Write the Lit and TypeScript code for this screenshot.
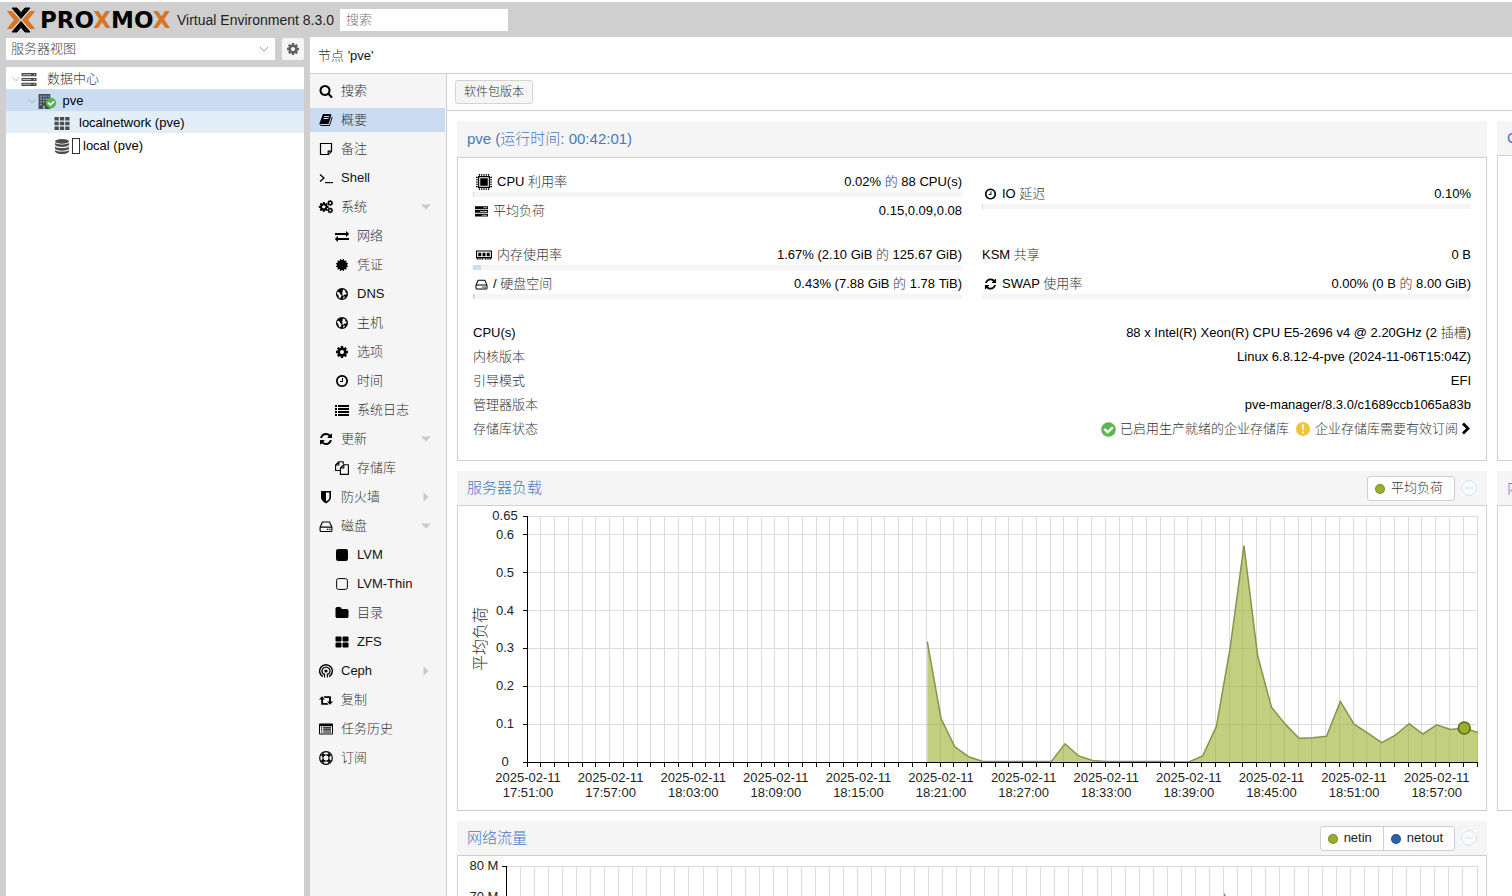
import { LitElement, html, svg, css, nothing } from "lit";
import { customElement, property } from "lit/decorators.js";
import { classMap } from "lit/directives/class-map.js";

const COG =
  "M1152 896q0-106-75-181t-181-75-181 75-75 181 75 181 181 75 181-75 75-181zm512-109v222q0 12-8 23t-20 13l-185 28q-19 54-39 91 35 50 107 138 10 12 10 25t-9 23q-27 37-99 108t-94 71q-12 0-26-9l-138-108q-44 23-91 38-16 136-29 186-7 28-36 28h-222q-14 0-24.5-8.5t-11.5-21.5l-28-184q-49-16-90-37l-141 107q-10 9-25 9-14 0-25-11-126-114-165-168-7-10-7-23 0-12 8-23 15-21 51-66.5t54-70.5q-27-50-41-99l-183-27q-13-2-21-12.5t-8-23.5v-222q0-12 8-23t19-13l186-28q14-46 39-92-40-57-107-138-10-12-10-24 0-10 9-23 26-36 98.5-107.5t94.5-71.5q13 0 26 10l138 107q44-23 91-38 16-136 29-186 7-28 36-28h222q14 0 24.5 8.5t11.5 21.5l28 184q49 16 90 37l142-107q9-9 24-9 13 0 25 10 129 119 165 170 7 8 7 22 0 12-8 23-15 21-51 66.5t-54 70.5q26 50 41 98l183 28q13 2 21 12.5t8 23.5z";

/* Glyphs on a 1792-unit grid. */
const LARGE_GRID: Record<string, string> = {
  cog: COG,
  search:
    "M1216 832q0-185-131.5-316.5t-316.5-131.5-316.5 131.5-131.5 316.5 131.5 316.5 316.5 131.5 316.5-131.5 131.5-316.5zm512 832q0 52-38 90t-90 38q-54 0-90-38l-343-342q-179 124-399 124-143 0-273.5-55.5t-225-150-150-225-55.5-273.5 55.5-273.5 150-225 225-150 273.5-55.5 273.5 55.5 225 150 150 225 55.5 273.5q0 220-124 399l343 343q37 37 37 90z",
  refresh:
    "M1639 1056q0 5-1 7-64 268-268 434.5t-478 166.5q-146 0-282.5-55t-243.5-157l-129 129q-19 19-45 19t-45-19-19-45v-448q0-26 19-45t45-19h448q26 0 45 19t19 45-19 45l-137 137q71 66 161 102t187 36q134 0 250-65t186-179q11-17 53-117 8-23 30-23h192q13 0 22.5 9.5t9.5 22.5zm25-800v448q0 26-19 45t-45 19h-448q-26 0-45-19t-19-45 19-45l138-138q-148-137-349-137-134 0-250 65t-186 179q-11 17-53 117-8 23-30 23h-199q-13 0-22.5-9.5t-9.5-22.5v-7q65-268 270-434.5t480-166.5q146 0 284 55.5t245 156.5l130-129q19-19 45-19t45 19 19 45z",
  clock:
    "M1024 544v448q0 14-9 23t-23 9h-320q-14 0-23-9t-9-23v-64q0-14 9-23t23-9h224v-352q0-14 9-23t23-9h64q14 0 23 9t9 23zm416 352q0-148-73-273t-198-198-273-73-273 73-198 198-73 273 73 273 198 198 273 73 273-73 198-198 73-273zm224 0q0 209-103 385.5t-279.5 279.5-385.5 103-385.5-103-279.5-279.5-103-385.5 103-385.5 279.5-279.5 385.5-103 385.5 103 279.5 279.5 103 385.5z",
  check:
    "M1412 734q0-28-18-46l-91-90q-19-19-45-19t-45 19l-408 407-226-226q-19-19-45-19t-45 19l-91 90q-18 18-18 46 0 27 18 45l362 362q19 19 45 19 27 0 46-19l543-543q18-18 18-45zm252 162q0 209-103 385.5t-279.5 279.5-385.5 103-385.5-103-279.5-279.5-103-385.5 103-385.5 279.5-279.5 385.5-103 385.5 103 279.5 279.5 103 385.5z",
  exchange:
    "M1792 1184v192q0 13-9.5 22.5t-22.5 9.5h-1376v192q0 13-9.5 22.5t-22.5 9.5q-12 0-24-10l-319-320q-9-9-9-22 0-14 9-23l320-320q9-9 23-9 13 0 22.5 9.5t9.5 22.5v192h1376q13 0 22.5 9.5t9.5 22.5zm0-544q0 14-9 23l-320 320q-9 9-23 9-13 0-22.5-9.5t-9.5-22.5v-192h-1376q-13 0-22.5-9.5t-9.5-22.5v-192q0-13 9.5-22.5t22.5-9.5h1376v-192q0-14 9-23t23-9q12 0 24 10l319 319q9 9 9 23z",
  certificate:
    "M1504 896l138 135q30 28 20 70-12 41-52 51l-188 48 53 186q12 41-19 70-29 31-70 19l-186-53-48 188q-10 40-51 52-12 2-19 2-31 0-51-22l-135-138-135 138q-28 30-70 20-41-11-51-52l-48-188-186 53q-41 12-70-19-31-29-19-70l53-186-188-48q-40-10-52-51-10-42 20-70l138-135-138-135q-30-28-20-70 12-41 52-51l188-48-53-186q-12-41 19-70 29-31 70-19l186 53 48-188q10-41 51-51 41-12 70 19l135 139 135-139q29-30 70-19 41 10 51 51l48 188 186-53q41-12 70 19 31 29 19 70l-53 186 188 48q40 10 52 51 10 42-20 70z",
  folder:
    "M1728 608v704q0 92-66 158t-158 66h-1216q-92 0-158-66t-66-158v-960q0-92 66-158t158-66h320q92 0 158 66t66 158v32h672q92 0 158 66t66 158z",
  book: "M1703 478q40 57 18 129l-275 906q-19 64-76.5 107.5t-122.5 43.5h-923q-77 0-148.5-53.5t-99.5-131.5q-24-67-2-127 0-4 3-27t4-37q1-8-3-21.5t-3-19.5q2-11 8-21t16.5-23.5 16.5-23.5q23-38 45-91.5t30-91.5q3-10 .5-30t-.5-28q3-11 17-28t17-23q21-36 42-92t25-90q1-9-2.5-32t.5-28q4-13 22-30.5t22-22.5q19-26 42.5-84.5t27.5-96.5q1-8-3-25.5t-2-26.5q2-8 9-18t18-23 17-21q8-12 16.5-30.5t15-35 16-36 19.5-32 26.5-23.5 36-11.5 47.5 5.5l-1 3q38-9 51-9h761q74 0 114 56t18 130l-274 906q-36 119-71.5 153.5t-128.5 34.5h-869q-27 0-38 15-11 16-1 43 24 70 144 70h923q29 0 56-15.5t35-41.5l300-987q7-22 5-57 38 15 59 43zm-1064 2q-4 13 2 22.5t20 9.5h608q13 0 25.5-9.5t16.5-22.5l21-64q4-13-2-22.5t-20-9.5h-608q-13 0-25.5 9.5t-16.5 22.5zm-83 256q-4 13 2 22.5t20 9.5h608q13 0 25.5-9.5t16.5-22.5l21-64q4-13-2-22.5t-20-9.5h-608q-13 0-25.5 9.5t-16.5 22.5z",
};

/* Glyphs on a 14-unit grid. */
const SMALL_GRID: Record<string, unknown> = {
  note: svg`<path d="M1.5 1.5h11v8l-3 3h-8z M12.5 9.2H9.2v3.3" fill="none" stroke="currentColor" stroke-width="1.2"/>`,
  terminal: svg`<path d="M1 3.5l4 3.5-4 3.5" fill="none" stroke="currentColor" stroke-width="1.2"/><path d="M6 11h8v1.2H6z"/>`,
  cogs: svg`<g transform="translate(-1 1.2) scale(.0064)"><path d=${COG}/></g><g transform="translate(7.8 -.4) scale(.0038)"><path d=${COG}/></g><g transform="translate(7.8 7) scale(.0038)"><path d=${COG}/></g>`,
  globe: svg`<path fill-rule="evenodd" d="M7 1a6 6 0 1 0 0 12A6 6 0 0 0 7 1z M8.6 2.600l1.900 1.200-.6 1.100 1 .5.9 1.200-.9 1.100-1.600-.2-1.200 1.400-.9-.9.6-1.500-1-.6.9-1.200-.2-1.300z M2.200 5l1.200-.3 1.400 1 .2 1.400L6.600 8l-.5 1.700-1 1.900-1.300-1-.3-2L2.200 7z" /><path d="M8.600 9.400l1.600.4-1.300 2-.9-.6z" fill="#f5f5f5"/>`,
  list: svg`<path d="M0 2h2v2H0z M0 5h2v2H0z M0 8h2v2H0z M0 11h2v2H0z M3 2h11v2H3z M3 5h11v2H3z M3 8h11v2H3z M3 11h11v2H3z"/>`,
  copy: svg`<g fill="none" stroke="currentColor" stroke-width="1.100" stroke-linejoin="round"><path d="M5 9.500H.6V4L3.600.8h4.600v2.500 M3.800.8V4H.6"/><path d="M8.600 3.800h4.800v9.600H5.400V7z M8.800 3.800V7H5.400"/></g>`,
  shield: svg`<path fill-rule="evenodd" d="M2 1h10v6.600c0 2.400-2.400 4.600-5 5.800-2.600-1.200-5-3.400-5-5.800z M7 2.600v9c2-1.100 3.400-2.500 3.400-4V2.600z"/>`,
  disk: svg`<path d="M3.400 3h7.200l2.300 5.200v3.300a1 1 0 0 1-1 1H2.100a1 1 0 0 1-1-1V8.200z M1.200 8.100h11.600" fill="none" stroke="currentColor" stroke-width="1.100" stroke-linejoin="round"/><path d="M8 9.700h1.300V11H8z M10.200 9.700h1.300V11h-1.300z"/>`,
  square: svg`<rect x="1" y="1" width="12" height="12" rx="2.200"/>`,
  squareOpen: svg`<rect x="1.600" y="1.600" width="10.800" height="10.800" rx="2" fill="none" stroke="currentColor" stroke-width="1"/>`,
  grid: svg`<rect x=".5" y="1.500" width="6" height="5" rx="1"/><rect x="7.500" y="1.500" width="6" height="5" rx="1"/><rect x=".5" y="7.500" width="6" height="5" rx="1"/><rect x="7.500" y="7.500" width="6" height="5" rx="1"/>`,
  ceph: svg`<g fill="none" stroke="currentColor" stroke-width="1.500"><path d="M3.800 12.600a6.400 6.400 0 1 1 6.400 0"/><path d="M4.800 10.400a4 4 0 1 1 4.400 0" stroke-width="1.300"/><path d="M5.600 13.500V9.600M8.400 13.500V9.600" stroke-width="1.100"/></g><circle cx="7" cy="7" r="1.600"/>`,
  retweet: svg`<path d="M3 3.200L6 6.400H4v3.600h4.200l1.300 1.800H2.200V6.400H0z M11 11.800L8 8.600h2V5H5.800L4.500 3.200h7.400v5.400H14z"/>`,
  listAlt: svg`<path fill-rule="evenodd" d="M1 1.500h12a1 1 0 0 1 1 1v9a1 1 0 0 1-1 1H1a1 1 0 0 1-1-1v-9a1 1 0 0 1 1-1z M1 4.300v7.200h12V4.300z"/><path d="M2 5.200h1.200v1.200H2z M2 7.300h1.200v1.200H2z M2 9.400h1.200v1.200H2z M4.200 5.200H12v1.200H4.200z M4.200 7.300H12v1.200H4.200z M4.200 9.400H12v1.200H4.200z"/>`,
  ring: svg`<circle cx="7" cy="7" r="6.300" fill="none" stroke="currentColor" stroke-width="1.200"/><circle cx="7" cy="7" r="3.200" fill="none" stroke="currentColor" stroke-width="1"/><path d="M2 4.200L4.200 2l2 2L4 6.200z M9.800 2L12 4.200l-2 2L7.800 4z M12 9.800L9.800 12l-2-2L10 7.800z M4.200 12L2 9.800l2-2L6.200 10z"/>`,
  tasks: svg`<path d="M0 2h14v3H0z M0 6h14v3H0z M0 10h14v3H0z"/><path d="M9 3h4v1H9z M5.500 7H13v1H5.500z M7.500 11H13v1H7.500z" fill="#bbb"/>`,
  server: svg`<path d="M0 1h14v3H0z M0 5.500h14v3H0z M0 10h14v3H0z"/><path d="M1 2h8v1H1z M1 6.500h8v1H1z M1 11h8v1H1z" fill="#bbb"/><path d="M11.500 2h1v1h-1z M11.500 6.500h1v1h-1z M11.500 11h1v1h-1z" fill="#eee"/>`,
  building: svg`<path d="M1 0h11v14H1z"/><path d="M2.500 1.500h1.500v1.500H2.500z M5 1.500h1.500v1.500H5z M7.500 1.500H9v1.500H7.500z M10 1.500h1v1.500h-1z M2.500 4h1.500v1.500H2.500z M5 4h1.500v1.500H5z M7.500 4H9v1.500H7.500z M2.500 6.500h1.500V8H2.500z M5 6.500h1.500V8H5z M7.500 6.500H9V8H7.500z M2.500 9h1.500v1.500H2.500z M5 11h2v3H5z" fill="#7fa0d0"/>`,
  th: svg`<path d="M0 1h4v3.300H0z M5 1h4v3.300H5z M10 1h4v3.300h-4z M0 5.400h4v3.300H0z M5 5.400h4v3.300H5z M10 5.400h4v3.300h-4z M0 9.800h4V13H0z M5 9.800h4V13H5z M10 9.800h4V13h-4z"/>`,
  database: svg`<ellipse cx="7" cy="2.200" rx="6.500" ry="2.200"/><path d="M.5 3.600c1.600 1.900 11.400 1.900 13 0v2.100c-1.600 2.400-11.400 2.400-13 0z M.5 7c1.600 1.900 11.400 1.900 13 0v2.100c-1.600 2.400-11.400 2.400-13 0z M.5 10.300c1.600 1.900 11.400 1.900 13 0v1.500c-1.600 2.900-11.400 2.900-13 0z"/>`,
  chip: svg`<path fill-rule="evenodd" d="M1.800 1.800h10.400v10.400H1.800z M2.800 2.800v8.400h8.400V2.800z"/><path d="M3.700 3.700h6.600v6.600H3.700z"/><path d="M3 0v14M5 0v14M7 0v14M9 0v14M11 0v14M0 3h14M0 5h14M0 7h14M0 9h14M0 11h14" stroke="currentColor" stroke-width="1" stroke-dasharray="1.600 10.800"/>`,
  memory: svg`<path fill-rule="evenodd" d="M0 3h14v7H0z M1 4v4.800h12V4z"/><path d="M2 5h2.600v3H2z M5.700 5h2.600v3H5.700z M9.400 5H12v3H9.400z M1 10h1v1.200H1z M3 10h1v1.200H3z M5 10h1v1.200H5z M8 10h1v1.200H8z M10 10h1v1.200h-1z M12 10h1v1.200h-1z"/>`,
  warn: svg`<circle cx="7" cy="7" r="7"/><path d="M5.900 2.500h2.200l-.3 5.700H6.200z M6 9.400h2v2H6z" fill="#fff"/>`,
  right: svg`<path d="M4 1.500l5 5-5 5" fill="none" stroke="currentColor" stroke-width="2.800"/>`,
  chevron: svg`<path d="M2 4.500l5 5 5-5" fill="none" stroke="currentColor" stroke-width="1"/>`,
  caretDown: svg`<path d="M2 4.500h10l-5 5z"/>`,
  caretRight: svg`<path d="M4.500 2v10l5-5z"/>`,
};

const icon = (name: string, cls = "") =>
  name in LARGE_GRID
    ? html`<svg class="icon ${cls}" viewBox="0 0 1792 1792" aria-hidden="true"><path d=${LARGE_GRID[name]} /></svg>`
    : html`<svg class="icon ${cls}" viewBox="0 0 14 14" aria-hidden="true">${SMALL_GRID[name]}</svg>`;

const base = css`
  * { box-sizing: border-box; }
  .icon { width: 14px; height: 14px; flex: none; fill: currentColor; display: block; overflow: visible; }
  button, input, select { font: inherit; color: inherit; margin: 0; }
`;

interface Series { name: string; color: string; edge: string; values: (number | null)[]; }

@customElement("rrd-chart")
export class RrdChart extends LitElement {
  @property({ attribute: false }) series!: Series;
  @property({ attribute: false }) ticks: { value: number; label: string }[] = [];
  @property({ type: Number }) max = 1;
  @property() caption = "";
  @property({ type: Number }) marker = -1;

  static styles = [base, css`
    :host { display: block; }
    .plot { display: block; width: 100%; height: 246px; overflow: visible; font-size: 13px; }
    .grid { stroke: #dcdcdc; shape-rendering: crispEdges; }
    .axis { stroke: #000; shape-rendering: crispEdges; }
    .line { fill: none; stroke-width: 1.5; vector-effect: non-scaling-stroke; }
    .label { fill: #222; text-anchor: middle; }
    .caption { fill: #333; font-size: 16px; text-anchor: middle; }
  `];

  private time(minute: number) {
    const total = 17 * 60 + 51 + minute;
    return `${Math.floor(total / 60)}:${String(total % 60).padStart(2, "0")}:00`;
  }

  render() {
    const { values, color, edge } = this.series;
    const n = values.length - 1;
    const h = 246;
    const y = (v: number) => h - (v / this.max) * h;
    const pts = values.flatMap((v, i) => (v === null ? [] : [[i, y(v)]]));
    const line = pts.map((p, i) => `${i ? "L" : "M"}${p[0]} ${p[1].toFixed(2)}`).join("");
    const area = `${line}L${n} ${h}L${pts[0][0]} ${h}Z`;
    const minutes = values.map((_, i) => i);
    const pct = (i: number) => `${(i / n) * 100}%`;
    return html`<svg class="plot" role="img" aria-label=${this.caption || this.series.name}>
      ${this.ticks.map((t) => svg`<line class="grid" x1="0" x2="100%" y1=${y(t.value)} y2=${y(t.value)} />`)}
      ${minutes.map((i) => svg`<line class="grid" x1=${pct(i)} x2=${pct(i)} y1="0" y2=${h} />`)}
      <g transform="translate(1 0)">
        <svg width="100%" height=${h} viewBox="0 0 ${n} ${h}" preserveAspectRatio="none">
          <path d=${area} fill=${color} fill-opacity="0.6" />
          <path class="line" d=${line} stroke=${edge} />
        </svg>
      </g>
      <line class="axis" x1="0" x2="0" y1="0" y2=${h} />
      <line class="axis" x1="0" x2="100%" y1=${h} y2=${h} />
      ${this.ticks.map((t) => svg`
        <line class="axis" x1="-4" x2="0" y1=${y(t.value)} y2=${y(t.value)} />
        <text class="label" x="-22" y=${y(t.value) + 4}>${t.label}</text>`)}
      ${minutes.map((i) => svg`<line class="axis" x1=${pct(i)} x2=${pct(i)} y1=${h} y2=${h + 5} />`)}
      <g transform="translate(1 0)">
        ${minutes.filter((i) => i % 6 === 0).map((i) => svg`
          <text class="label" y=${h + 20}><tspan x=${pct(i)}>2025-02-11</tspan><tspan x=${pct(i)} dy="15">${this.time(i)}</tspan></text>`)}
        ${this.marker >= 0
          ? svg`<circle cx=${pct(this.marker)} cy=${y(values[this.marker]!)} r="6" fill=${color} stroke="#5a6a10" stroke-width="1.500" />`
          : nothing}
      </g>
      ${this.caption ? svg`<text class="caption" transform="rotate(-90)" x=${-h / 2} y="-41">${this.caption}</text>` : nothing}
    </svg>`;
  }
}

interface NavItem { icon: string; label: string; child?: boolean; caret?: "caretDown" | "caretRight"; active?: boolean; }

const NAV: NavItem[] = [
  { icon: "search", label: "搜索" },
  { icon: "book", label: "概要", active: true },
  { icon: "note", label: "备注" },
  { icon: "terminal", label: "Shell" },
  { icon: "cogs", label: "系统", caret: "caretDown" },
  { icon: "exchange", label: "网络", child: true },
  { icon: "certificate", label: "凭证", child: true },
  { icon: "globe", label: "DNS", child: true },
  { icon: "globe", label: "主机", child: true },
  { icon: "cog", label: "选项", child: true },
  { icon: "clock", label: "时间", child: true },
  { icon: "list", label: "系统日志", child: true },
  { icon: "refresh", label: "更新", caret: "caretDown" },
  { icon: "copy", label: "存储库", child: true },
  { icon: "shield", label: "防火墙", caret: "caretRight" },
  { icon: "disk", label: "磁盘", caret: "caretDown" },
  { icon: "square", label: "LVM", child: true },
  { icon: "squareOpen", label: "LVM-Thin", child: true },
  { icon: "folder", label: "目录", child: true },
  { icon: "grid", label: "ZFS", child: true },
  { icon: "ceph", label: "Ceph", caret: "caretRight" },
  { icon: "retweet", label: "复制" },
  { icon: "listAlt", label: "任务历史" },
  { icon: "ring", label: "订阅" },
];

interface Metric { icon?: string; large?: boolean; label: string; value: string; usage?: number; }

const METRICS: Record<string, Metric[]> = {
  cpu: [
    { icon: "chip", large: true, label: "CPU 利用率", value: "0.02% 的 88 CPU(s)", usage: 0.2 },
    { icon: "tasks", label: "平均负荷", value: "0.15,0.09,0.08" },
  ],
  io: [{ icon: "clock", label: "IO 延迟", value: "0.10%", usage: 0.2 }],
  memory: [
    { icon: "memory", large: true, label: "内存使用率", value: "1.67% (2.10 GiB 的 125.67 GiB)", usage: 1.67 },
    { icon: "disk", label: "/ 硬盘空间", value: "0.43% (7.88 GiB 的 1.78 TiB)", usage: 0.43 },
  ],
  swap: [
    { label: "KSM 共享", value: "0 B" },
    { icon: "refresh", label: "SWAP 使用率", value: "0.00% (0 B 的 8.00 GiB)", usage: 0 },
  ],
};

const DETAILS = [
  ["CPU(s)", "88 x Intel(R) Xeon(R) CPU E5-2696 v4 @ 2.20GHz (2 插槽)"],
  ["内核版本", "Linux 6.8.12-4-pve (2024-11-06T15:04Z)"],
  ["引导模式", "EFI"],
  ["管理器版本", "pve-manager/8.3.0/c1689ccb1065a83b"],
];

const LOAD: Series = {
  name: "平均负荷", color: "#9aad2c", edge: "#87944c",
  values: [
    ...Array(29).fill(null),
    0.318, 0.115, 0.04, 0.014, 0.002, 0.001, 0.001, 0.001, 0.001, 0.001, 0.048, 0.016, 0.004, 0.001, 0.001, 0.001,
    0.001, 0.001, 0, 0, 0.016, 0.094, 0.302, 0.572, 0.28, 0.145, 0.1, 0.063, 0.064, 0.068, 0.16, 0.1, 0.076, 0.051,
    0.071, 0.101, 0.074, 0.098, 0.086, 0.09, 0.078,
  ],
};

const NETIN: Series = {
  name: "netin", color: "#9aad2c", edge: "#87944c",
  values: [...Array(29).fill(null), ...Array(22).fill(0), 71, ...Array(18).fill(0)],
};

@customElement("app-root")
export class AppRoot extends LitElement {
  static styles = [base, css`
    :host {
      display: flex; flex-direction: column; height: 100vh; overflow: hidden; background: #cfcfcf; color: #000;
      font: 300 13px/20px "Liberation Sans", "Noto Sans CJK SC", sans-serif; border-top: 2px solid #fff;
    }
    .zh { color: #333; }
    .top { display: flex; align-items: center; height: 35px; padding-left: 6px; flex: none; }
    .mark { width: 30px; height: 26px; flex: none; }
    .brand { font: 700 23px/26px "DejaVu Sans", sans-serif; margin-left: 4px; width: 131px; }
    .brand .x { color: #d9751f; }
    .version { margin-left: 6px; font-size: 14px; width: 157px; white-space: nowrap; color: #222; }
    .search { margin-left: 6px; width: 168px; height: 22px; border: 0; background: #fff; padding: 0 6px; outline: 0; }
    .search::placeholder { color: #777; opacity: 1; }
    .body { display: flex; flex: 1; min-height: 0; }
    .side { width: 310px; flex: none; padding: 1px 6px 0; display: flex; flex-direction: column; }
    .view { display: flex; gap: 7px; height: 22px; margin-bottom: 7px; flex: none; }
    .combo { flex: 1; display: grid; background: #fff; }
    .combo select { grid-area: 1 / 1; appearance: none; border: 0; background: none; padding: 0 5px; color: #444; outline: 0; }
    .combo .icon { grid-area: 1 / 1; justify-self: end; align-self: center; margin-right: 5px; color: #888; width: 12px; }
    .gear { width: 22px; height: 22px; border: 0; background: #f5f5f5; border-radius: 2px; display: grid; place-items: center; padding: 0; color: #606060; }
    .tree { flex: 1; background: #fff; margin: 0; padding: 0; list-style: none; }
    .node { display: flex; align-items: center; height: 22px; padding-top: 2px; white-space: pre; }
    .node .fold { width: 10px; height: 10px; color: #999; }
    .node .kind { color: #4c4c4c; width: 16px; height: 15px; }
    .node.selected { background: #c9dcf2; }
    .node.hover { background: #e2eff9; }
    .l0 { padding-left: 5px; } .l0 .name { margin-left: 10px; }
    .l1 { padding-left: 21px; } .l1 .name { margin-left: 2px; }
    .l2 { padding-left: 48px; } .l2 .name { margin-left: 9px; }
    .l3 { padding-left: 48px; height: 24px; } .l3 .name { margin-left: 3px; }
    .l1 .badge { width: 12px; height: 12px; color: #4fb848; align-self: flex-end; margin: 0 0 2px -8px; background: radial-gradient(#fff 50%, transparent 55%); }
    .tofu { width: 8px; height: 16px; border: 1px solid #333; margin-left: 2px; }
    .main { flex: 1; min-width: 0; background: #fff; display: flex; flex-direction: column; }
    .title { height: 37px; flex: none; padding: 2px 8px 0; display: flex; align-items: center; border-bottom: 1px solid #cfcfcf; white-space: pre; color: #111; font-size: 13px; font-weight: inherit; margin: 0; }
    .work { flex: 1; display: flex; min-height: 0; }
    .nav { width: 137px; flex: none; background: #f5f5f5; border-right: 1px solid #cfcfcf; padding: 5px 1px 0 0; display: flex; flex-direction: column; gap: 5px; }
    .item { display: flex; align-items: center; height: 24px; padding-left: 9px; gap: 8px; color: #111; text-decoration: none; flex: none; }
    .item.child { padding-left: 25px; }
    .item.active { background: #c9dcf2; }
    .item .caret { margin-left: auto; margin-right: 12px; color: #cfcfcf; }
    .item .icon { color: #000; }
    .item .caret.icon { color: #cacaca; }
    .page { flex: 1; min-width: 0; display: flex; flex-direction: column; }
    .tools { height: 37px; flex: none; border-bottom: 1px solid #cfcfcf; padding: 6px 8px; }
    .tools button { height: 24px; padding: 0 8px; border: 1px solid #d4d4d4; border-radius: 3px; background: #f5f5f5; font-size: 12px; line-height: 20px; display: block; color: #333; }
    .rows { flex: 1; min-height: 0; overflow: hidden; padding: 10px 0 0 10px; display: flex; flex-direction: column; gap: 10px; }
    .row { display: flex; gap: 10px; flex: none; }
    .panel { flex: 0 0 calc(100% - 25px); display: flex; flex-direction: column; }
    .head { height: 34px; background: #f5f5f5; color: #4a76c4; display: flex; align-items: center; padding: 0 10px; gap: 6px; flex: none; }
    .head.tall { height: 36px; }
    .head h2 { font-size: 15px; font-weight: inherit; margin: 0 auto 0 0; white-space: nowrap; }
    .card { border: 1px solid #cfcfcf; flex: 1; }
    .legend { display: flex; border: 1px solid #cfcfcf; border-radius: 3px; background: #fff; height: 25px; overflow: hidden; }
    .legend button { border: 0; background: none; padding: 0 11px 0 7px; display: flex; align-items: center; gap: 6px; color: #222; }
    .legend button + button { border-left: 1px solid #cfcfcf; }
    .dot { width: 10px; height: 10px; border-radius: 5px; border: 1px solid rgba(0, 0, 0, 0.2); margin-top: 2px; }
    .dot.a { background: #9aad2c; }
    .dot.b { background: #2f5fa8; }
    .reset { border: 0; padding: 0; width: 16px; height: 16px; background: #fafbfc; color: #d3e0ef; display: block; }
    .reset .icon { width: 16px; height: 16px; }
    .status { padding: 13px 15px 19px; }
    .metrics { display: grid; grid-template-columns: 1fr 1fr; column-gap: 20px; row-gap: 23px; align-items: center; margin-bottom: 22px; }
    .metric { height: 29px; }
    .metric:last-child { height: auto; }
    .pair { display: flex; justify-content: space-between; height: 21px; line-height: 22px; }
    .pair .what { display: flex; align-items: center; white-space: pre; }
    .pair .icon { margin: 0 5px 0 2px; width: 13px; }
    .pair .icon.large { width: 16px; height: 16px; margin: 0 5px 0 3px; }
    .bar { height: 5px; background: #f5f5f5; }
    .fill { height: 5px; background: #c9dcf2; }
    .detail { display: flex; justify-content: space-between; align-items: center; height: 24px; }
    .repo { display: flex; align-items: center; white-space: pre; }
    .repo .icon { margin-right: 4px; }
    .repo .good { color: #5bb850; width: 17px; height: 17px; margin-right: 3px; }
    .repo .mid { color: #f4c430; margin: 0 5px 0 7px; }
    .repo .go { margin: 0 -2px 0 1px; }
    .load { padding: 10px 9px 48px 69px; }
    .net { padding: 10px 9px 48px 48px; }
    @media (max-width: 900px) { .side { width: 220px; } .metrics { grid-template-columns: 1fr; } }
  `];

  /* Han runs are set in a lighter tone than the Latin text beside them. */
  private text(s: string) {
    return s.split(/([\u4e00-\u9fff]+)/).map((p, i) => (i % 2 ? html`<span class="zh">${p}</span>` : p));
  }

  private metric(m: Metric) {
    return html`<div class="metric">
      <div class="pair">
        <span class="what">${m.icon ? icon(m.icon, m.large ? "large" : "") : nothing}<span>${this.text(m.label)}</span></span>
        <span>${this.text(m.value)}</span>
      </div>
      ${m.usage === undefined ? nothing : html`<div class="bar"><div class="fill" style="width:${m.usage}%"></div></div>`}
    </div>`;
  }

  private reset() {
    return html`<button class="reset" aria-label="重置缩放"><svg class="icon" viewBox="0 0 16 16"><circle cx="8" cy="8" r="7.500" fill="none" stroke="currentColor" /><path d="M4 7.500h8v1H4z" /></svg></button>`;
  }

  render() {
    return html`
      <header class="top">
        <svg class="mark" viewBox="0 0 30 26" aria-hidden="true">
          <path d="M1.500 4.500h4.500l7.500 8.500-7.500 8.500H1.500L8.500 13z M28.500 4.500H24L16.500 13l7.500 8.500h4.500L21.500 13z" fill="#d9751f" stroke="#d9751f" stroke-linejoin="round" />
          <path d="M6 1h5l4 4.800L19 1h5l-9 10.500z M6 25h5l4-4.800 4 4.800h5l-9-10.500z" fill="#000" stroke="#000" stroke-linejoin="round" />
        </svg>
        <span class="brand">PRO<span class="x">X</span>MO<span class="x">X</span></span>
        <span class="version">Virtual Environment 8.3.0</span>
        <input class="search" type="text" placeholder="搜索" aria-label="搜索" />
      </header>
      <div class="body">
        <aside class="side">
          <div class="view">
            <div class="combo">
              <select aria-label="视图"><option>服务器视图</option></select>
              ${icon("chevron")}
            </div>
            <button class="gear" aria-label="设置">${icon("cog")}</button>
          </div>
          <ul class="tree">
            <li class="node l0">${icon("chevron", "fold")}${icon("server", "kind")}<span class="name zh">数据中心</span></li>
            <li class="node l1 selected">${icon("chevron", "fold")}${icon("building", "kind")}${icon("check", "badge")}<span class="name"> pve</span></li>
            <li class="node l2 hover">${icon("th", "kind")}<span class="name">localnetwork (pve)</span></li>
            <li class="node l3">${icon("database", "kind")}<span class="tofu"></span><span class="name">local (pve)</span></li>
          </ul>
        </aside>
        <main class="main">
          <h1 class="title">${this.text("节点 'pve'")}</h1>
          <div class="work">
            <nav class="nav">
              ${NAV.map((n) => html`<a href="#" class=${classMap({ item: true, child: !!n.child, active: !!n.active })}>
                ${icon(n.icon)}<span>${this.text(n.label)}</span>${n.caret ? icon(n.caret, "caret") : nothing}</a>`)}
            </nav>
            <div class="page">
              <div class="tools"><button>软件包版本</button></div>
              <div class="rows">
                <div class="row">
                  <section class="panel">
                    <div class="head tall"><h2>pve (运行时间: 00:42:01)</h2></div>
                    <div class="card status">
                      <div class="metrics">
                        ${Object.values(METRICS).map((g) => html`<div>${g.map((m) => this.metric(m))}</div>`)}
                      </div>
                      ${DETAILS.map(([k, v]) => html`<div class="detail"><span>${this.text(k)}</span><span>${this.text(v)}</span></div>`)}
                      <div class="detail">
                        <span class="zh">存储库状态</span>
                        <span class="repo">${icon("check", "good")}<span class="zh">已启用生产就绪的企业存储库</span>${icon("warn", "mid")}<span class="zh">企业存储库需要有效订阅</span>${icon("right", "go")}</span>
                      </div>
                    </div>
                  </section>
                  <section class="panel"><div class="head"><h2>CPU利用率</h2></div><div class="card"></div></section>
                </div>
                <div class="row">
                  <section class="panel">
                    <div class="head"><h2>服务器负载</h2>
                      <div class="legend"><button><span class="dot a"></span>${this.text("平均负荷")}</button></div>${this.reset()}
                    </div>
                    <div class="card load">
                      <rrd-chart .series=${LOAD} max="0.65" caption="平均负荷" marker="68"
                        .ticks=${[0, 0.1, 0.2, 0.3, 0.4, 0.5, 0.6, 0.65].map((v) => ({ value: v, label: String(v) }))}></rrd-chart>
                    </div>
                  </section>
                  <section class="panel"><div class="head"><h2>内存使用率</h2></div><div class="card"></div></section>
                </div>
                <div class="row">
                  <section class="panel">
                    <div class="head"><h2>网络流量</h2>
                      <div class="legend"><button><span class="dot a"></span>netin</button><button><span class="dot b"></span>netout</button></div>${this.reset()}
                    </div>
                    <div class="card net">
                      <rrd-chart .series=${NETIN} max="80"
                        .ticks=${[0, 10, 20, 30, 40, 50, 60, 70, 80].map((v) => ({ value: v, label: v ? `${v} M` : "0" }))}></rrd-chart>
                    </div>
                  </section>
                </div>
              </div>
            </div>
          </div>
        </main>
      </div>`;
  }
}
